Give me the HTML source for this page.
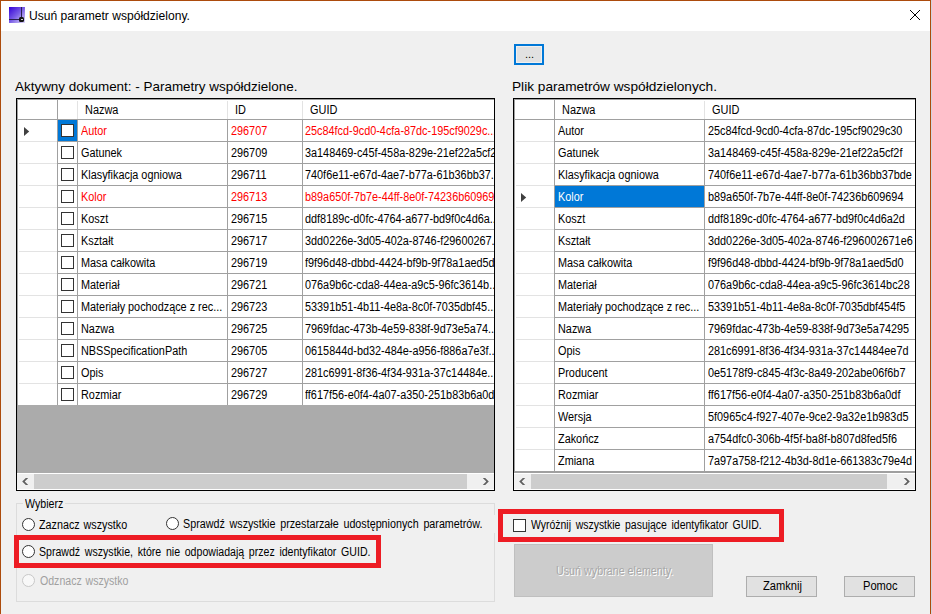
<!DOCTYPE html>
<html><head><meta charset="utf-8"><style>
html,body{margin:0;padding:0}
body{width:932px;height:614px;overflow:hidden;position:relative;background:#cdd5dd;font-family:"Liberation Sans",sans-serif;}
div,span{position:absolute;box-sizing:border-box}
span{white-space:pre;line-height:1}
.c{font-size:12px;color:#000;transform:scaleX(0.905);transform-origin:0 0}
.h{font-size:12px;color:#000;transform:scaleX(0.91);transform-origin:0 0}
.f{transform-origin:0 0}
</style></head><body>

<div style="left:0px;top:0px;width:931px;height:614px;background:#f0f0f0;border-left:1px solid #ac4b0c;border-top:1px solid #ac4b0c;border-right:1px solid #ac4b0c"></div>
<div style="left:1px;top:1px;width:929px;height:30px;background:#fff"></div>
<div style="left:9px;top:7px;width:16px;height:16px;background:linear-gradient(135deg,#3300d6 0%,#7a5ee6 50%,#e0daf8 100%)"></div>
<div style="left:21px;top:7px;width:1px;height:13px;background:#2a2050"></div>
<div style="left:9px;top:19px;width:13px;height:1px;background:#2a2050"></div>
<div style="left:19px;top:17px;width:5px;height:5px;background:#151515;border-radius:1.5px"></div>
<div style="left:21px;top:19px;width:2px;height:1px;background:#cfcfcf"></div>
<span class="f" style="left:29.49px;top:10px;font-size:12px;color:#000;word-spacing:0px;transform:scaleX(1.0064);">Usuń parametr współdzielony.</span>
<svg style="position:absolute;left:909px;top:9px" width="12" height="12"><path d="M1 1L11 11M11 1L1 11" stroke="#000" stroke-width="1"/></svg>
<div style="left:514px;top:44px;width:30px;height:21px;background:#e1e1e1;border:2px solid #0078d7"></div>
<div style="left:516px;top:46px;width:26px;height:17px;border:1px solid #f0f0f0"></div>
<span class="c" style="left:525px;top:49px;transform:none;font-size:11px">...</span>
<span class="f" style="left:14.70px;top:80px;font-size:13.5px;color:#000;word-spacing:0px;transform:scaleX(0.9957);">Aktywny dokument: - Parametry współdzielone.</span>
<span class="f" style="left:511.59px;top:80px;font-size:13.5px;color:#000;word-spacing:0px;transform:scaleX(1.0120);">Plik parametrów współdzielonych.</span>
<div style="left:16px;top:98px;width:479px;height:393px;background:#ababab;border:1px solid #000"></div>
<div style="left:17px;top:99px;width:477px;height:306px;background:#fff"></div>
<div style="left:17px;top:119px;width:477px;height:1px;background:#a0a0a0"></div>
<div style="left:57px;top:99px;width:1px;height:20px;background:#a0a0a0"></div>
<div style="left:77px;top:101px;width:1px;height:18px;background:#e3e3e3"></div>
<div style="left:227px;top:101px;width:1px;height:18px;background:#e3e3e3"></div>
<div style="left:302px;top:101px;width:1px;height:18px;background:#e3e3e3"></div>
<div style="left:17px;top:99px;width:477px;height:1px;background:#a0a0a0"></div>
<div style="left:17px;top:99px;width:1px;height:374px;background:#a0a0a0"></div>
<span class="h" style="left:85px;top:104px;">Nazwa</span>
<span class="h" style="left:235px;top:104px;">ID</span>
<span class="h" style="left:310px;top:104px;">GUID</span>
<div style="left:19px;top:141px;width:38px;height:1px;background:#e3e3e3"></div>
<div style="left:57px;top:141px;width:437px;height:1px;background:#a0a0a0"></div>
<div style="left:57px;top:120px;width:1px;height:22px;background:#a0a0a0"></div>
<div style="left:77px;top:120px;width:1px;height:22px;background:#a0a0a0"></div>
<div style="left:227px;top:120px;width:1px;height:22px;background:#a0a0a0"></div>
<div style="left:302px;top:120px;width:1px;height:22px;background:#a0a0a0"></div>
<div style="left:58px;top:120px;width:19px;height:21px;background:#0078d7"></div>
<svg style="position:absolute;left:24px;top:127px" width="6" height="9"><path d="M0 0L5.2 4.5L0 9Z" fill="#404040"/></svg>
<div style="left:61px;top:124px;width:13px;height:13px;background:#fff;border:1px solid #333"></div>
<span class="c" style="left:81px;top:125px;color:#ff0000">Autor</span>
<span class="c" style="left:231px;top:125px;color:#ff0000">296707</span>
<div style="left:303px;top:120px;width:191px;height:21px;overflow:hidden"><span class="c" style="left:2px;top:5px;color:#ff0000">25c84fcd-9cd0-4cfa-87dc-195cf9029c...</span></div>
<div style="left:19px;top:163px;width:38px;height:1px;background:#e3e3e3"></div>
<div style="left:57px;top:163px;width:437px;height:1px;background:#a0a0a0"></div>
<div style="left:57px;top:142px;width:1px;height:22px;background:#a0a0a0"></div>
<div style="left:77px;top:142px;width:1px;height:22px;background:#a0a0a0"></div>
<div style="left:227px;top:142px;width:1px;height:22px;background:#a0a0a0"></div>
<div style="left:302px;top:142px;width:1px;height:22px;background:#a0a0a0"></div>
<div style="left:61px;top:146px;width:13px;height:13px;background:#fff;border:1px solid #333"></div>
<span class="c" style="left:81px;top:147px;color:#000">Gatunek</span>
<span class="c" style="left:231px;top:147px;color:#000">296709</span>
<div style="left:303px;top:142px;width:191px;height:21px;overflow:hidden"><span class="c" style="left:2px;top:5px;color:#000">3a148469-c45f-458a-829e-21ef22a5cf2f</span></div>
<div style="left:19px;top:185px;width:38px;height:1px;background:#e3e3e3"></div>
<div style="left:57px;top:185px;width:437px;height:1px;background:#a0a0a0"></div>
<div style="left:57px;top:164px;width:1px;height:22px;background:#a0a0a0"></div>
<div style="left:77px;top:164px;width:1px;height:22px;background:#a0a0a0"></div>
<div style="left:227px;top:164px;width:1px;height:22px;background:#a0a0a0"></div>
<div style="left:302px;top:164px;width:1px;height:22px;background:#a0a0a0"></div>
<div style="left:61px;top:168px;width:13px;height:13px;background:#fff;border:1px solid #333"></div>
<span class="c" style="left:81px;top:169px;color:#000">Klasyfikacja ogniowa</span>
<span class="c" style="left:231px;top:169px;color:#000">296711</span>
<div style="left:303px;top:164px;width:191px;height:21px;overflow:hidden"><span class="c" style="left:2px;top:5px;color:#000">740f6e11-e67d-4ae7-b77a-61b36bb37...</span></div>
<div style="left:19px;top:207px;width:38px;height:1px;background:#e3e3e3"></div>
<div style="left:57px;top:207px;width:437px;height:1px;background:#a0a0a0"></div>
<div style="left:57px;top:186px;width:1px;height:22px;background:#a0a0a0"></div>
<div style="left:77px;top:186px;width:1px;height:22px;background:#a0a0a0"></div>
<div style="left:227px;top:186px;width:1px;height:22px;background:#a0a0a0"></div>
<div style="left:302px;top:186px;width:1px;height:22px;background:#a0a0a0"></div>
<div style="left:61px;top:190px;width:13px;height:13px;background:#fff;border:1px solid #333"></div>
<span class="c" style="left:81px;top:191px;color:#ff0000">Kolor</span>
<span class="c" style="left:231px;top:191px;color:#ff0000">296713</span>
<div style="left:303px;top:186px;width:191px;height:21px;overflow:hidden"><span class="c" style="left:2px;top:5px;color:#ff0000">b89a650f-7b7e-44ff-8e0f-74236b609694</span></div>
<div style="left:19px;top:229px;width:38px;height:1px;background:#e3e3e3"></div>
<div style="left:57px;top:229px;width:437px;height:1px;background:#a0a0a0"></div>
<div style="left:57px;top:208px;width:1px;height:22px;background:#a0a0a0"></div>
<div style="left:77px;top:208px;width:1px;height:22px;background:#a0a0a0"></div>
<div style="left:227px;top:208px;width:1px;height:22px;background:#a0a0a0"></div>
<div style="left:302px;top:208px;width:1px;height:22px;background:#a0a0a0"></div>
<div style="left:61px;top:212px;width:13px;height:13px;background:#fff;border:1px solid #333"></div>
<span class="c" style="left:81px;top:213px;color:#000">Koszt</span>
<span class="c" style="left:231px;top:213px;color:#000">296715</span>
<div style="left:303px;top:208px;width:191px;height:21px;overflow:hidden"><span class="c" style="left:2px;top:5px;color:#000">ddf8189c-d0fc-4764-a677-bd9f0c4d6a...</span></div>
<div style="left:19px;top:251px;width:38px;height:1px;background:#e3e3e3"></div>
<div style="left:57px;top:251px;width:437px;height:1px;background:#a0a0a0"></div>
<div style="left:57px;top:230px;width:1px;height:22px;background:#a0a0a0"></div>
<div style="left:77px;top:230px;width:1px;height:22px;background:#a0a0a0"></div>
<div style="left:227px;top:230px;width:1px;height:22px;background:#a0a0a0"></div>
<div style="left:302px;top:230px;width:1px;height:22px;background:#a0a0a0"></div>
<div style="left:61px;top:234px;width:13px;height:13px;background:#fff;border:1px solid #333"></div>
<span class="c" style="left:81px;top:235px;color:#000">Kształt</span>
<span class="c" style="left:231px;top:235px;color:#000">296717</span>
<div style="left:303px;top:230px;width:191px;height:21px;overflow:hidden"><span class="c" style="left:2px;top:5px;color:#000">3dd0226e-3d05-402a-8746-f29600267...</span></div>
<div style="left:19px;top:273px;width:38px;height:1px;background:#e3e3e3"></div>
<div style="left:57px;top:273px;width:437px;height:1px;background:#a0a0a0"></div>
<div style="left:57px;top:252px;width:1px;height:22px;background:#a0a0a0"></div>
<div style="left:77px;top:252px;width:1px;height:22px;background:#a0a0a0"></div>
<div style="left:227px;top:252px;width:1px;height:22px;background:#a0a0a0"></div>
<div style="left:302px;top:252px;width:1px;height:22px;background:#a0a0a0"></div>
<div style="left:61px;top:256px;width:13px;height:13px;background:#fff;border:1px solid #333"></div>
<span class="c" style="left:81px;top:257px;color:#000">Masa całkowita</span>
<span class="c" style="left:231px;top:257px;color:#000">296719</span>
<div style="left:303px;top:252px;width:191px;height:21px;overflow:hidden"><span class="c" style="left:2px;top:5px;color:#000">f9f96d48-dbbd-4424-bf9b-9f78a1aed5d0</span></div>
<div style="left:19px;top:295px;width:38px;height:1px;background:#e3e3e3"></div>
<div style="left:57px;top:295px;width:437px;height:1px;background:#a0a0a0"></div>
<div style="left:57px;top:274px;width:1px;height:22px;background:#a0a0a0"></div>
<div style="left:77px;top:274px;width:1px;height:22px;background:#a0a0a0"></div>
<div style="left:227px;top:274px;width:1px;height:22px;background:#a0a0a0"></div>
<div style="left:302px;top:274px;width:1px;height:22px;background:#a0a0a0"></div>
<div style="left:61px;top:278px;width:13px;height:13px;background:#fff;border:1px solid #333"></div>
<span class="c" style="left:81px;top:279px;color:#000">Materiał</span>
<span class="c" style="left:231px;top:279px;color:#000">296721</span>
<div style="left:303px;top:274px;width:191px;height:21px;overflow:hidden"><span class="c" style="left:2px;top:5px;color:#000">076a9b6c-cda8-44ea-a9c5-96fc3614b...</span></div>
<div style="left:19px;top:317px;width:38px;height:1px;background:#e3e3e3"></div>
<div style="left:57px;top:317px;width:437px;height:1px;background:#a0a0a0"></div>
<div style="left:57px;top:296px;width:1px;height:22px;background:#a0a0a0"></div>
<div style="left:77px;top:296px;width:1px;height:22px;background:#a0a0a0"></div>
<div style="left:227px;top:296px;width:1px;height:22px;background:#a0a0a0"></div>
<div style="left:302px;top:296px;width:1px;height:22px;background:#a0a0a0"></div>
<div style="left:61px;top:300px;width:13px;height:13px;background:#fff;border:1px solid #333"></div>
<span class="c" style="left:81px;top:301px;color:#000">Materiały pochodzące z rec...</span>
<span class="c" style="left:231px;top:301px;color:#000">296723</span>
<div style="left:303px;top:296px;width:191px;height:21px;overflow:hidden"><span class="c" style="left:2px;top:5px;color:#000">53391b51-4b11-4e8a-8c0f-7035dbf45...</span></div>
<div style="left:19px;top:339px;width:38px;height:1px;background:#e3e3e3"></div>
<div style="left:57px;top:339px;width:437px;height:1px;background:#a0a0a0"></div>
<div style="left:57px;top:318px;width:1px;height:22px;background:#a0a0a0"></div>
<div style="left:77px;top:318px;width:1px;height:22px;background:#a0a0a0"></div>
<div style="left:227px;top:318px;width:1px;height:22px;background:#a0a0a0"></div>
<div style="left:302px;top:318px;width:1px;height:22px;background:#a0a0a0"></div>
<div style="left:61px;top:322px;width:13px;height:13px;background:#fff;border:1px solid #333"></div>
<span class="c" style="left:81px;top:323px;color:#000">Nazwa</span>
<span class="c" style="left:231px;top:323px;color:#000">296725</span>
<div style="left:303px;top:318px;width:191px;height:21px;overflow:hidden"><span class="c" style="left:2px;top:5px;color:#000">7969fdac-473b-4e59-838f-9d73e5a74...</span></div>
<div style="left:19px;top:361px;width:38px;height:1px;background:#e3e3e3"></div>
<div style="left:57px;top:361px;width:437px;height:1px;background:#a0a0a0"></div>
<div style="left:57px;top:340px;width:1px;height:22px;background:#a0a0a0"></div>
<div style="left:77px;top:340px;width:1px;height:22px;background:#a0a0a0"></div>
<div style="left:227px;top:340px;width:1px;height:22px;background:#a0a0a0"></div>
<div style="left:302px;top:340px;width:1px;height:22px;background:#a0a0a0"></div>
<div style="left:61px;top:344px;width:13px;height:13px;background:#fff;border:1px solid #333"></div>
<span class="c" style="left:81px;top:345px;color:#000">NBSSpecificationPath</span>
<span class="c" style="left:231px;top:345px;color:#000">296705</span>
<div style="left:303px;top:340px;width:191px;height:21px;overflow:hidden"><span class="c" style="left:2px;top:5px;color:#000">0615844d-bd32-484e-a956-f886a7e3f...</span></div>
<div style="left:19px;top:383px;width:38px;height:1px;background:#e3e3e3"></div>
<div style="left:57px;top:383px;width:437px;height:1px;background:#a0a0a0"></div>
<div style="left:57px;top:362px;width:1px;height:22px;background:#a0a0a0"></div>
<div style="left:77px;top:362px;width:1px;height:22px;background:#a0a0a0"></div>
<div style="left:227px;top:362px;width:1px;height:22px;background:#a0a0a0"></div>
<div style="left:302px;top:362px;width:1px;height:22px;background:#a0a0a0"></div>
<div style="left:61px;top:366px;width:13px;height:13px;background:#fff;border:1px solid #333"></div>
<span class="c" style="left:81px;top:367px;color:#000">Opis</span>
<span class="c" style="left:231px;top:367px;color:#000">296727</span>
<div style="left:303px;top:362px;width:191px;height:21px;overflow:hidden"><span class="c" style="left:2px;top:5px;color:#000">281c6991-8f36-4f34-931a-37c14484e...</span></div>
<div style="left:57px;top:384px;width:1px;height:21px;background:#a0a0a0"></div>
<div style="left:77px;top:384px;width:1px;height:21px;background:#a0a0a0"></div>
<div style="left:227px;top:384px;width:1px;height:21px;background:#a0a0a0"></div>
<div style="left:302px;top:384px;width:1px;height:21px;background:#a0a0a0"></div>
<div style="left:61px;top:388px;width:13px;height:13px;background:#fff;border:1px solid #333"></div>
<span class="c" style="left:81px;top:389px;color:#000">Rozmiar</span>
<span class="c" style="left:231px;top:389px;color:#000">296729</span>
<div style="left:303px;top:384px;width:191px;height:21px;overflow:hidden"><span class="c" style="left:2px;top:5px;color:#000">ff617f56-e0f4-4a07-a350-251b83b6a0df</span></div>
<div style="left:17px;top:473px;width:477px;height:17px;background:#fff"></div>
<div style="left:17px;top:474px;width:477px;height:15px;background:#f0f0f0"></div>
<div style="left:34px;top:474px;width:433px;height:15px;background:#cdcdcd"></div>
<svg style="position:absolute;left:22px;top:478px" width="7" height="7"><path d="M6.2 0H3.8L0.2 3.5L3.8 7H6.2L2.7 3.5Z" fill="#606060"/></svg>
<svg style="position:absolute;left:482px;top:478px" width="7" height="7"><path d="M0.8 0H3.2L6.8 3.5L3.2 7H0.8L4.3 3.5Z" fill="#606060"/></svg>
<div style="left:513px;top:98px;width:403px;height:393px;background:#ababab;border:1px solid #000"></div>
<div style="left:514px;top:99px;width:401px;height:373px;background:#fff"></div>
<div style="left:514px;top:119px;width:401px;height:1px;background:#a0a0a0"></div>
<div style="left:554px;top:99px;width:1px;height:20px;background:#a0a0a0"></div>
<div style="left:704px;top:101px;width:1px;height:18px;background:#e3e3e3"></div>
<div style="left:514px;top:99px;width:401px;height:1px;background:#a0a0a0"></div>
<div style="left:514px;top:99px;width:1px;height:373px;background:#a0a0a0"></div>
<span class="h" style="left:562px;top:104px;">Nazwa</span>
<span class="h" style="left:712px;top:104px;">GUID</span>
<div style="left:516px;top:141px;width:38px;height:1px;background:#e3e3e3"></div>
<div style="left:554px;top:141px;width:361px;height:1px;background:#a0a0a0"></div>
<div style="left:554px;top:120px;width:1px;height:22px;background:#a0a0a0"></div>
<div style="left:704px;top:120px;width:1px;height:22px;background:#a0a0a0"></div>
<span class="c" style="left:558px;top:125px;color:#000">Autor</span>
<span class="c" style="left:708px;top:125px;">25c84fcd-9cd0-4cfa-87dc-195cf9029c30</span>
<div style="left:516px;top:163px;width:38px;height:1px;background:#e3e3e3"></div>
<div style="left:554px;top:163px;width:361px;height:1px;background:#a0a0a0"></div>
<div style="left:554px;top:142px;width:1px;height:22px;background:#a0a0a0"></div>
<div style="left:704px;top:142px;width:1px;height:22px;background:#a0a0a0"></div>
<span class="c" style="left:558px;top:147px;color:#000">Gatunek</span>
<span class="c" style="left:708px;top:147px;">3a148469-c45f-458a-829e-21ef22a5cf2f</span>
<div style="left:516px;top:185px;width:38px;height:1px;background:#e3e3e3"></div>
<div style="left:554px;top:185px;width:361px;height:1px;background:#a0a0a0"></div>
<div style="left:554px;top:164px;width:1px;height:22px;background:#a0a0a0"></div>
<div style="left:704px;top:164px;width:1px;height:22px;background:#a0a0a0"></div>
<span class="c" style="left:558px;top:169px;color:#000">Klasyfikacja ogniowa</span>
<span class="c" style="left:708px;top:169px;">740f6e11-e67d-4ae7-b77a-61b36bb37bde</span>
<div style="left:516px;top:207px;width:38px;height:1px;background:#e3e3e3"></div>
<div style="left:554px;top:207px;width:361px;height:1px;background:#a0a0a0"></div>
<div style="left:554px;top:186px;width:1px;height:22px;background:#a0a0a0"></div>
<div style="left:704px;top:186px;width:1px;height:22px;background:#a0a0a0"></div>
<div style="left:555px;top:186px;width:149px;height:21px;background:#0078d7"></div>
<svg style="position:absolute;left:521px;top:193px" width="6" height="9"><path d="M0 0L5.2 4.5L0 9Z" fill="#404040"/></svg>
<span class="c" style="left:558px;top:191px;color:#fff">Kolor</span>
<span class="c" style="left:708px;top:191px;">b89a650f-7b7e-44ff-8e0f-74236b609694</span>
<div style="left:516px;top:229px;width:38px;height:1px;background:#e3e3e3"></div>
<div style="left:554px;top:229px;width:361px;height:1px;background:#a0a0a0"></div>
<div style="left:554px;top:208px;width:1px;height:22px;background:#a0a0a0"></div>
<div style="left:704px;top:208px;width:1px;height:22px;background:#a0a0a0"></div>
<span class="c" style="left:558px;top:213px;color:#000">Koszt</span>
<span class="c" style="left:708px;top:213px;">ddf8189c-d0fc-4764-a677-bd9f0c4d6a2d</span>
<div style="left:516px;top:251px;width:38px;height:1px;background:#e3e3e3"></div>
<div style="left:554px;top:251px;width:361px;height:1px;background:#a0a0a0"></div>
<div style="left:554px;top:230px;width:1px;height:22px;background:#a0a0a0"></div>
<div style="left:704px;top:230px;width:1px;height:22px;background:#a0a0a0"></div>
<span class="c" style="left:558px;top:235px;color:#000">Kształt</span>
<span class="c" style="left:708px;top:235px;">3dd0226e-3d05-402a-8746-f296002671e6</span>
<div style="left:516px;top:273px;width:38px;height:1px;background:#e3e3e3"></div>
<div style="left:554px;top:273px;width:361px;height:1px;background:#a0a0a0"></div>
<div style="left:554px;top:252px;width:1px;height:22px;background:#a0a0a0"></div>
<div style="left:704px;top:252px;width:1px;height:22px;background:#a0a0a0"></div>
<span class="c" style="left:558px;top:257px;color:#000">Masa całkowita</span>
<span class="c" style="left:708px;top:257px;">f9f96d48-dbbd-4424-bf9b-9f78a1aed5d0</span>
<div style="left:516px;top:295px;width:38px;height:1px;background:#e3e3e3"></div>
<div style="left:554px;top:295px;width:361px;height:1px;background:#a0a0a0"></div>
<div style="left:554px;top:274px;width:1px;height:22px;background:#a0a0a0"></div>
<div style="left:704px;top:274px;width:1px;height:22px;background:#a0a0a0"></div>
<span class="c" style="left:558px;top:279px;color:#000">Materiał</span>
<span class="c" style="left:708px;top:279px;">076a9b6c-cda8-44ea-a9c5-96fc3614bc28</span>
<div style="left:516px;top:317px;width:38px;height:1px;background:#e3e3e3"></div>
<div style="left:554px;top:317px;width:361px;height:1px;background:#a0a0a0"></div>
<div style="left:554px;top:296px;width:1px;height:22px;background:#a0a0a0"></div>
<div style="left:704px;top:296px;width:1px;height:22px;background:#a0a0a0"></div>
<span class="c" style="left:558px;top:301px;color:#000">Materiały pochodzące z rec...</span>
<span class="c" style="left:708px;top:301px;">53391b51-4b11-4e8a-8c0f-7035dbf454f5</span>
<div style="left:516px;top:339px;width:38px;height:1px;background:#e3e3e3"></div>
<div style="left:554px;top:339px;width:361px;height:1px;background:#a0a0a0"></div>
<div style="left:554px;top:318px;width:1px;height:22px;background:#a0a0a0"></div>
<div style="left:704px;top:318px;width:1px;height:22px;background:#a0a0a0"></div>
<span class="c" style="left:558px;top:323px;color:#000">Nazwa</span>
<span class="c" style="left:708px;top:323px;">7969fdac-473b-4e59-838f-9d73e5a74295</span>
<div style="left:516px;top:361px;width:38px;height:1px;background:#e3e3e3"></div>
<div style="left:554px;top:361px;width:361px;height:1px;background:#a0a0a0"></div>
<div style="left:554px;top:340px;width:1px;height:22px;background:#a0a0a0"></div>
<div style="left:704px;top:340px;width:1px;height:22px;background:#a0a0a0"></div>
<span class="c" style="left:558px;top:345px;color:#000">Opis</span>
<span class="c" style="left:708px;top:345px;">281c6991-8f36-4f34-931a-37c14484ee7d</span>
<div style="left:516px;top:383px;width:38px;height:1px;background:#e3e3e3"></div>
<div style="left:554px;top:383px;width:361px;height:1px;background:#a0a0a0"></div>
<div style="left:554px;top:362px;width:1px;height:22px;background:#a0a0a0"></div>
<div style="left:704px;top:362px;width:1px;height:22px;background:#a0a0a0"></div>
<span class="c" style="left:558px;top:367px;color:#000">Producent</span>
<span class="c" style="left:708px;top:367px;">0e5178f9-c845-4f3c-8a49-202abe06f6b7</span>
<div style="left:516px;top:405px;width:38px;height:1px;background:#e3e3e3"></div>
<div style="left:554px;top:405px;width:361px;height:1px;background:#a0a0a0"></div>
<div style="left:554px;top:384px;width:1px;height:22px;background:#a0a0a0"></div>
<div style="left:704px;top:384px;width:1px;height:22px;background:#a0a0a0"></div>
<span class="c" style="left:558px;top:389px;color:#000">Rozmiar</span>
<span class="c" style="left:708px;top:389px;">ff617f56-e0f4-4a07-a350-251b83b6a0df</span>
<div style="left:516px;top:427px;width:38px;height:1px;background:#e3e3e3"></div>
<div style="left:554px;top:427px;width:361px;height:1px;background:#a0a0a0"></div>
<div style="left:554px;top:406px;width:1px;height:22px;background:#a0a0a0"></div>
<div style="left:704px;top:406px;width:1px;height:22px;background:#a0a0a0"></div>
<span class="c" style="left:558px;top:411px;color:#000">Wersja</span>
<span class="c" style="left:708px;top:411px;">5f0965c4-f927-407e-9ce2-9a32e1b983d5</span>
<div style="left:516px;top:449px;width:38px;height:1px;background:#e3e3e3"></div>
<div style="left:554px;top:449px;width:361px;height:1px;background:#a0a0a0"></div>
<div style="left:554px;top:428px;width:1px;height:22px;background:#a0a0a0"></div>
<div style="left:704px;top:428px;width:1px;height:22px;background:#a0a0a0"></div>
<span class="c" style="left:558px;top:433px;color:#000">Zakończ</span>
<span class="c" style="left:708px;top:433px;">a754dfc0-306b-4f5f-ba8f-b807d8fed5f6</span>
<div style="left:554px;top:450px;width:1px;height:21px;background:#a0a0a0"></div>
<div style="left:704px;top:450px;width:1px;height:21px;background:#a0a0a0"></div>
<span class="c" style="left:558px;top:455px;color:#000">Zmiana</span>
<span class="c" style="left:708px;top:455px;">7a97a758-f212-4b3d-8d1e-661383c79e4d</span>
<div style="left:514px;top:471px;width:401px;height:2px;background:#a0a0a0"></div>
<div style="left:514px;top:473px;width:401px;height:17px;background:#fff"></div>
<div style="left:514px;top:474px;width:401px;height:15px;background:#f0f0f0"></div>
<div style="left:531px;top:474px;width:356px;height:15px;background:#cdcdcd"></div>
<svg style="position:absolute;left:519px;top:478px" width="7" height="7"><path d="M6.2 0H3.8L0.2 3.5L3.8 7H6.2L2.7 3.5Z" fill="#606060"/></svg>
<svg style="position:absolute;left:903px;top:478px" width="7" height="7"><path d="M0.8 0H3.2L6.8 3.5L3.2 7H0.8L4.3 3.5Z" fill="#606060"/></svg>
<div style="left:16px;top:503px;width:479px;height:99px;border:1px solid #dcdcdc"></div>
<div style="left:23px;top:497px;width:42px;height:14px;background:#f0f0f0"></div>
<span class="f" style="left:24.90px;top:498px;font-size:12px;color:#000;word-spacing:0px;transform:scaleX(0.8857);">Wybierz</span>
<div style="left:22px;top:518px;width:13px;height:13px;border-radius:50%;border:1px solid #333;background:#fff"></div>
<span class="f" style="left:39.00px;top:519px;font-size:12px;color:#000;word-spacing:1px;transform:scaleX(0.8969);">Zaznacz wszystko</span>
<div style="left:166px;top:517px;width:13px;height:13px;border-radius:50%;border:1px solid #333;background:#fff"></div>
<span class="f" style="left:182.71px;top:518px;font-size:12px;color:#000;word-spacing:2px;transform:scaleX(0.8943);">Sprawdź wszystkie przestarzałe udostępnionych parametrów.</span>
<div style="left:14px;top:535px;width:367px;height:33px;border:5px solid #ed1c24"></div>
<div style="left:22px;top:545px;width:13px;height:13px;border-radius:50%;border:1px solid #333;background:#fff"></div>
<span class="f" style="left:38.72px;top:546px;font-size:12px;color:#000;word-spacing:2px;transform:scaleX(0.8812);">Sprawdź wszystkie, które nie odpowiadają przez identyfikator GUID.</span>
<div style="left:22px;top:574px;width:13px;height:13px;border-radius:50%;border:1px solid #c8c8c8;background:#f8f8f8"></div>
<span class="f" style="left:39.90px;top:575px;font-size:12px;color:#a0a0a0;word-spacing:1px;transform:scaleX(0.8808);">Odznacz wszystko</span>
<div style="left:494px;top:515px;width:4px;height:18px;background:#f0f0f0"></div>
<div style="left:498px;top:509px;width:286px;height:33px;border:5px solid #ed1c24"></div>
<div style="left:513px;top:519px;width:13px;height:13px;background:#fff;border:1px solid #333"></div>
<span class="f" style="left:530.80px;top:519px;font-size:12px;color:#000;word-spacing:2px;transform:scaleX(0.8715);">Wyróżnij wszystkie pasujące identyfikator GUID.</span>
<div style="left:514px;top:544px;width:199px;height:53px;background:#cccccc;border:1px solid #bfbfbf"></div>
<span class="f" style="left:555.61px;top:565px;font-size:12px;color:#a8a8a8;word-spacing:0px;transform:scaleX(0.8945);text-shadow:1px 1px 0 #fff">Usuń wybrane elementy.</span>
<div style="left:746px;top:576px;width:71px;height:21px;background:#e1e1e1;border:1px solid #adadad"></div>
<span class="f" style="left:762.80px;top:580px;font-size:12px;color:#000;word-spacing:0px;transform:scaleX(0.9268);">Zamknij</span>
<div style="left:844px;top:576px;width:71px;height:21px;background:#e1e1e1;border:1px solid #adadad"></div>
<span class="f" style="left:862.67px;top:580px;font-size:12px;color:#000;word-spacing:0px;transform:scaleX(0.9257);">Pomoc</span>
</body></html>
